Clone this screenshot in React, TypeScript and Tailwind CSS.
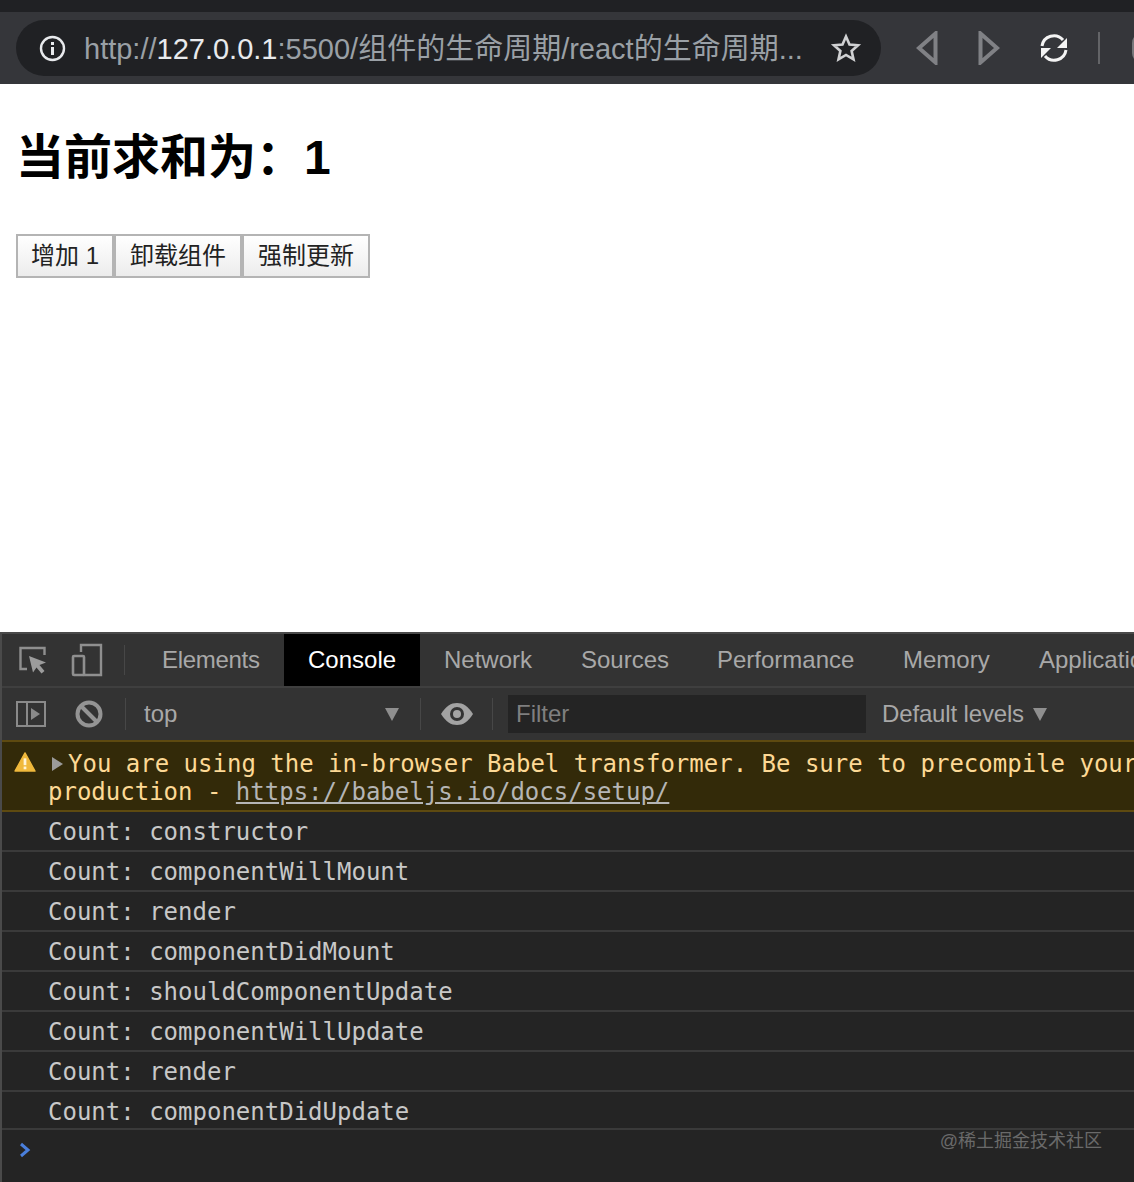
const cjkSans = "font-['Liberation_Sans','Noto_Sans_CJK_SC',sans-serif]";

const tabs = [
  { name: "Elements", cls: "w-[146px] tracking-[-0.3px] text-[#a8a8a8]" },
  { name: "Console", cls: "w-[136px] bg-black text-white" },
  { name: "Network", cls: "w-[137px] text-[#a8a8a8]" },
  { name: "Sources", cls: "w-[136px] text-[#a8a8a8]" },
  { name: "Performance", cls: "w-[186px] text-[#a8a8a8]" },
  { name: "Memory", cls: "w-[136px] text-[#a8a8a8]" },
  { name: "Application", cls: "w-[170px] text-[#a8a8a8]" },
];

const buttons = [
  { label: "增加 1", cls: "w-[98px]" },
  { label: "卸载组件", cls: "w-[128px]" },
  { label: "强制更新", cls: "w-[128px]" },
];

const logs = [
  "constructor",
  "componentWillMount",
  "render",
  "componentDidMount",
  "shouldComponentUpdate",
  "componentWillUpdate",
  "render",
  "componentDidUpdate",
];

function BrowserBar() {
  return (
    <div className="shrink-0 bg-[#202124] pt-[12px]">
      <div className="flex h-[72px] items-center overflow-hidden bg-[#35363a] pl-[16px]">
        {/* Omnibox */}
        <div className="flex h-[56px] w-[865px] shrink-0 items-center rounded-[28px] bg-[#202124] pl-[23px]">
          <svg width="27" height="27" viewBox="0 0 27 27" className="shrink-0">
            <circle cx="13.5" cy="13.5" r="11.5" fill="none" stroke="#e8eaed" strokeWidth="2.4" />
            <rect x="12" y="12" width="3" height="8" fill="#e8eaed" />
            <rect x="12" y="7" width="3" height="3" fill="#e8eaed" />
          </svg>
          <span className="ml-[18px] w-[718px] shrink-0 overflow-hidden pt-[2px] text-[29px] leading-[34px] whitespace-nowrap text-[#9aa0a6]">
            http://<span className="text-[#e8eaed]">127.0.0.1</span>:5500/组件的生命周期/react的生命周期...
          </span>
          <svg width="32" height="32" viewBox="0 0 32 32" className="ml-[28px] shrink-0">
            <path
              d="M16 4.5l3.5 8 8.5.8-6.4 5.6 1.9 8.4-7.5-4.4-7.5 4.4 1.9-8.4L4 13.3l8.5-.8z"
              fill="none"
              stroke="#d0d1d3"
              strokeWidth="2.6"
            />
          </svg>
        </div>
        {/* Nav buttons */}
        <svg width="22" height="34" viewBox="0 0 22 34" className="ml-[35px] shrink-0">
          <path d="M19.5 2.5v29L3 17z" fill="none" stroke="#808185" strokeWidth="4" />
        </svg>
        <svg width="22" height="34" viewBox="0 0 22 34" className="ml-[40px] shrink-0">
          <path d="M2.5 2.5v29L19 17z" fill="none" stroke="#808185" strokeWidth="4" />
        </svg>
        <svg width="30" height="30" viewBox="0 0 30 30" className="ml-[39px] shrink-0">
          <path d="M3 13A12 12 0 0 1 24 7" fill="none" stroke="#f4f4f4" strokeWidth="3" />
          <path d="M27 17A12 12 0 0 1 6 23" fill="none" stroke="#f4f4f4" strokeWidth="3" />
          <path d="M28 5v10H18z" fill="#f4f4f4" />
          <path d="M2 25V15h10z" fill="#f4f4f4" />
        </svg>
        <div className="ml-[29px] h-[32px] w-[2px] shrink-0 bg-[#636467]" />
        <div className="ml-[32px] h-[30px] w-[10px] shrink-0 rounded-l-full bg-[#77787b]" />
      </div>
    </div>
  );
}

function PageContent() {
  return (
    <div className="min-h-0 flex-1 bg-white pt-[44px] pl-[16px]">
      <h1 className="text-[48px] leading-[60px] font-bold text-black">当前求和为：1</h1>
      <div className="mt-[46px] flex">
        {buttons.map((b) => (
          <button
            key={b.label}
            className={`h-[44px] border-2 border-[#b4b4b4] bg-gradient-to-b from-white to-[#ececec] text-[24px] leading-[32px] text-[#222] ${b.cls}`}
          >
            {b.label}
          </button>
        ))}
      </div>
    </div>
  );
}

function TabBar() {
  return (
    <div className="flex h-[54px] shrink-0 items-center border-b-2 border-[#3f3f3f] bg-[#333333]">
      <svg width="30" height="30" viewBox="0 0 30 30" className="ml-[16px] shrink-0">
        <path d="M9 24H2.5V3h24v7" fill="none" stroke="#8f8f8f" strokeWidth="2.4" />
        <path d="M11 11l17 6.500-6.500 2.500 5 6-3 2.500-5-6-3.500 5z" fill="#9c9c9c" />
      </svg>
      <svg width="32" height="34" viewBox="0 0 32 34" className="ml-[23px] shrink-0">
        <path d="M10 9V2h20v30H12" fill="none" stroke="#8f8f8f" strokeWidth="2.4" />
        <rect x="2" y="13" width="11" height="19" rx="1" fill="none" stroke="#8f8f8f" strokeWidth="2.6" />
      </svg>
      <div className="ml-[21px] h-[30px] w-[1px] shrink-0 bg-[#474747]" />
      <div className="ml-[13px] flex h-full min-w-0 flex-1 overflow-hidden">
        {tabs.map((tab) => (
          <div key={tab.name} className={`flex shrink-0 items-center pl-[24px] text-[24px] ${tab.cls}`}>
            {tab.name}
          </div>
        ))}
      </div>
    </div>
  );
}

function ConsoleToolbar() {
  return (
    <div className="flex h-[52px] shrink-0 items-center bg-[#333333]">
      <svg width="32" height="28" viewBox="0 0 32 28" className="ml-[13px] shrink-0">
        <rect x="2" y="2" width="28" height="24" fill="none" stroke="#8a8a8a" strokeWidth="2" />
        <path d="M12 2v24" stroke="#8a8a8a" strokeWidth="2" />
        <path d="M16 8l9 6-9 6z" fill="#8a8a8a" />
      </svg>
      <svg width="28" height="28" viewBox="0 0 28 28" className="ml-[28px] shrink-0">
        <circle cx="14" cy="14" r="11.500" fill="none" stroke="#949494" strokeWidth="4" />
        <path d="M6 6l16 16" stroke="#949494" strokeWidth="4" />
      </svg>
      <div className="ml-[22px] h-[32px] w-[1px] shrink-0 bg-[#474747]" />
      <span className="ml-[18px] w-[241px] shrink-0 text-[24px] leading-[32px] text-[#a8a8a8]">top</span>
      <svg width="14" height="13" viewBox="0 0 14 13" className="shrink-0">
        <path d="M0 0h14L7 13z" fill="#8f8f8f" />
      </svg>
      <div className="ml-[21px] h-[32px] w-[1px] shrink-0 bg-[#474747]" />
      <svg width="34" height="24" viewBox="0 0 34 24" className="ml-[19px] shrink-0">
        <path d="M1 12C6 4 11 1 17 1s11 3 16 11c-5 8-10 11-16 11S6 20 1 12z" fill="#a3a3a3" />
        <circle cx="17" cy="12" r="7" fill="#333333" />
        <circle cx="17" cy="12" r="4" fill="#a3a3a3" />
      </svg>
      <div className="ml-[18px] h-[32px] w-[1px] shrink-0 bg-[#474747]" />
      <div className="ml-[15px] flex h-[38px] w-[358px] shrink-0 items-center bg-[#242424] pl-[8px] text-[24px] text-[#7f7f7f]">
        Filter
      </div>
      <span className="ml-[16px] shrink-0 text-[24px] leading-[32px] tracking-[-0.15px] text-[#a8a8a8]">
        Default levels
      </span>
      <svg width="14" height="13" viewBox="0 0 14 13" className="ml-[9px] shrink-0">
        <path d="M0 0h14L7 13z" fill="#8f8f8f" />
      </svg>
    </div>
  );
}

function ConsoleOutput() {
  return (
    <div className="flex min-h-0 flex-1 flex-col bg-[#242424] font-['DejaVu_Sans_Mono',monospace] text-[24px]">
      {/* Babel warning */}
      <div className="relative h-[72px] shrink-0 overflow-hidden border-y-2 border-[#5e4a10] bg-[#332a09] pt-[8px] pl-[46px] leading-[28px] whitespace-nowrap text-[#fdd995]">
        <svg width="22" height="20" viewBox="0 0 24 22" className="absolute top-[10px] left-[12px]">
          <path d="M12 1l11 20H1z" fill="#f0b93c" stroke="#f0b93c" strokeWidth="1.500" strokeLinejoin="round" />
          <rect x="10.500" y="7" width="3" height="7.500" fill="#fff4d6" />
          <rect x="10.500" y="16" width="3" height="3" fill="#fff4d6" />
        </svg>
        <div className="flex items-center">
          <svg width="11" height="14" viewBox="0 0 11 14" className="mr-[5px] ml-[4px] shrink-0">
            <path d="M0 0l11 7-11 7z" fill="#9a9a9a" />
          </svg>
          You are using the in-browser Babel transformer. Be sure to precompile your scripts for
        </div>
        <div>
          production - <span className="text-[#b5b5b5] underline">https://babeljs.io/docs/setup/</span>
        </div>
      </div>
      {/* Log rows */}
      {logs.map((log, i) => (
        <div
          key={i}
          className={`flex shrink-0 items-center border-b-2 border-[#3a3a3a] pl-[46px] whitespace-pre text-[#c8c8c8] ${
            i === logs.length - 1 ? "h-[38px] pt-[4px]" : "h-[40px] pt-[2px]"
          }`}
        >
          Count: {log}
        </div>
      ))}
      <div className="flex flex-1 items-start pt-[12px] pl-[17px]">
        <svg width="12" height="16" viewBox="0 0 12 16">
          <path d="M2 2l7 6-7 6" fill="none" stroke="#4a7fdc" strokeWidth="3" />
        </svg>
      </div>
    </div>
  );
}

export default function App() {
  return (
    <div className={`relative flex h-[1182px] w-[1134px] flex-col overflow-hidden ${cjkSans}`}>
      <BrowserBar />
      <PageContent />
      <div className="flex h-[550px] shrink-0 flex-col border-t-2 border-l-2 border-[#4a4a4a]">
        <TabBar />
        <ConsoleToolbar />
        <ConsoleOutput />
      </div>
      {/* Watermark */}
      <div className="absolute right-[32px] bottom-[29px] text-[18px] leading-[24px] text-[#6a6a6a]">
        @稀土掘金技术社区
      </div>
    </div>
  );
}
